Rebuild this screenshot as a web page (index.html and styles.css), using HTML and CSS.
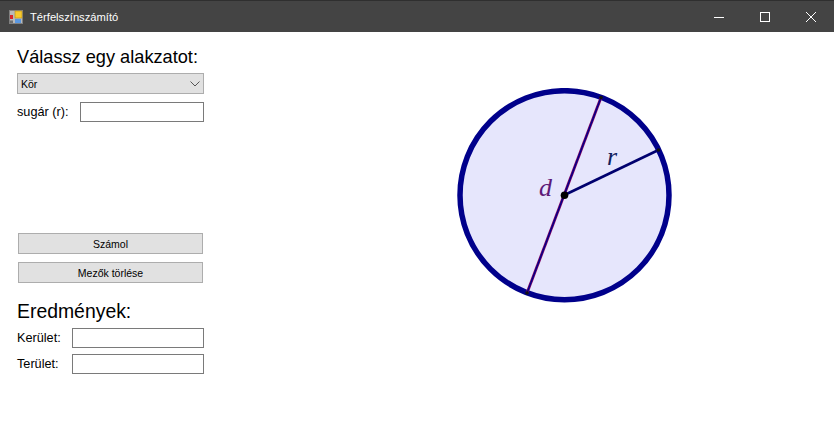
FILE: index.html
```html
<!DOCTYPE html>
<html lang="hu">
<head>
<meta charset="utf-8">
<title>Térfelszínszámító</title>
<link rel="stylesheet" href="styles.css">
</head>
<body>
<div class="window">
  <header class="titlebar">
    <svg class="app-icon" width="14" height="14" viewBox="0 0 14 14">
      <rect x="0.5" y="0.5" width="13" height="13" fill="#b9b9b9" stroke="#808080"/>
      <rect x="6" y="1" width="7" height="7" fill="#f7c92f" stroke="#b88a10" stroke-width="0.6"/>
      <rect x="1" y="5" width="3" height="4" fill="#d8262c"/>
      <rect x="6" y="9" width="6" height="4" fill="#5a97e0"/>
      <rect x="1" y="10.5" width="3" height="2.5" fill="#6f6f6f"/>
    </svg>
    <span class="title">Térfelszínszámító</span>
    <div class="controls">
      <span class="ctl"><svg width="10" height="10" viewBox="0 0 10 10"><path d="M0 5.5H10" stroke="#fff" fill="none"/></svg></span>
      <span class="ctl"><svg width="10" height="10" viewBox="0 0 10 10"><rect x="0.5" y="0.5" width="9" height="9" stroke="#fff" fill="none"/></svg></span>
      <span class="ctl"><svg width="10" height="10" viewBox="0 0 10 10"><path d="M0 0L10 10M10 0L0 10" stroke="#fff" fill="none"/></svg></span>
    </div>
  </header>
  <main class="content">
    <section class="form">
      <h2 class="heading">Válassz egy alakzatot:</h2>
      <div class="combo"><span>Kör</span>
        <svg width="10" height="6" viewBox="0 0 10 6"><path d="M0.5 0.5L5 5L9.5 0.5" stroke="#555" fill="none"/></svg>
      </div>
      <div class="row row-radius"><label>sugár (r):</label><span class="field field-radius"></span></div>
      <div class="buttons">
        <div class="btn">Számol</div>
        <div class="btn">Mezők törlése</div>
      </div>
      <h2 class="heading heading-results">Eredmények:</h2>
      <div class="row row-result"><label>Kerület:</label><span class="field field-result"></span></div>
      <div class="row row-result"><label>Terület:</label><span class="field field-result"></span></div>
    </section>
    <section class="figure">
      <svg class="circle" width="216" height="216" viewBox="0 0 216 216">
        <circle cx="107.5" cy="107.2" r="104.5" fill="#e6e6fc" stroke="#00008b" stroke-width="5.5"/>
        <path d="M144 9.5L70 205" stroke="#800060" stroke-width="2.8" fill="none"/>
        <path d="M144 9.5L70 205" stroke="#00008b" stroke-width="1.4" fill="none"/>
        <path d="M107.5 107L201.5 62" stroke="#00006e" stroke-width="2.6" fill="none"/>
        <circle cx="144" cy="9.5" r="1.8" fill="#111"/>
        <circle cx="70" cy="205" r="1.8" fill="#111"/>
        <circle cx="201.5" cy="62" r="1.8" fill="#111"/>
        <circle cx="107.5" cy="107.2" r="3.8" fill="#000"/>
        <text class="sym sym-d" x="82" y="108">d</text>
        <text class="sym sym-r" x="150" y="77">r</text>
      </svg>
    </section>
  </main>
</div>
</body>
</html>
```

FILE: styles.css
```css
* { box-sizing: border-box; }
html, body { margin: 0; padding: 0; background: #fff; }
body { font-family: "Liberation Sans", Arial, sans-serif; }
.window { width: 834px; height: 433px; display: flex; flex-direction: column; overflow: hidden; }

.titlebar {
  height: 32px;
  flex: none;
  display: flex;
  align-items: center;
  background: #444;
  border-top: 1px solid #2f2f2f;
  padding-left: 9px;
  color: #fff;
}
.app-icon { flex: none; }
.title { margin-left: 7px; font-size: 11.2px; }
.controls { margin-left: auto; display: flex; height: 100%; }
.ctl { width: 46px; display: flex; align-items: center; justify-content: center; }
.ctl svg { display: block; }

.content { flex: 1; display: flex; }
.form { width: 187px; margin-left: 17px; flex: none; display: flex; flex-direction: column; }
.heading { margin: 0; font-weight: 400; font-size: 18.2px; line-height: 21px; color: #000; }
.form > .heading:first-child { margin-top: 15px; }
.combo {
  margin-top: 5px;
  height: 21px;
  background: #e1e1e1;
  border: 1px solid #adadad;
  display: flex;
  align-items: center;
  justify-content: space-between;
  padding: 0 3px;
  font-size: 10.5px;
  color: #000;
}
.combo span { display: block; }
.row { display: flex; align-items: center; font-size: 12.7px; color: #000; height: 20px; }
.row label { display: block; }
.row-radius { margin-top: 8px; }
.row-result { margin-top: 6px; }
.field { display: block; height: 20px; background: #fff; border: 1px solid #7a7a7a; margin-left: auto; }
.field-radius { width: 124px; }
.field-result { width: 132px; }
.buttons { margin-top: 111px; margin-left: 1px; margin-right: 1px; display: flex; flex-direction: column; gap: 8px; }
.btn {
  height: 21px;
  background: #e1e1e1;
  border: 1px solid #adadad;
  display: flex;
  align-items: center;
  justify-content: center;
  font-size: 10.5px;
  color: #000;
}
.heading.heading-results { margin-top: 17px; font-size: 19.4px; line-height: 22px; }
.heading-results + .row-result { margin-top: 6px; }

.figure { margin-left: 253px; margin-top: 56px; flex: none; }
.circle { display: block; }
.sym { font-family: "Liberation Serif", "DejaVu Serif", serif; font-style: italic; font-size: 26px; }
.sym-d { fill: #5e1a78; }
.sym-r { fill: #10205e; }
```
